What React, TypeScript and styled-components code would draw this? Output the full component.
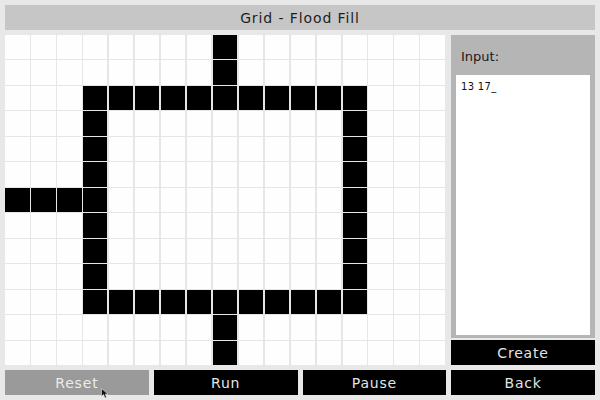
import React from "react";
import styled, { createGlobalStyle } from "styled-components";

const Global = createGlobalStyle`
  html, body { margin: 0; padding: 0; background: #e8e8e8; }
  body { font-family: "DejaVu Sans", "Liberation Sans", sans-serif; }
`;

const ROWS = 13;
const COLS = 17;

const Screen = styled.div`
  position: relative;
  width: 600px;
  height: 400px;
  box-sizing: border-box;
  padding: 5px;
  display: flex;
  flex-direction: column;
  gap: 5px;
  background: #e8e8e8;
  overflow: hidden;
`;

const TitleBar = styled.div`
  height: 25px;
  background: #c6c6c6;
  display: flex;
  align-items: center;
  justify-content: center;
  font-size: 14px;
  letter-spacing: 0.9px;
  color: #1e1e1e;
`;

const Main = styled.div`
  display: flex;
  gap: 6px;
  height: 330px;
`;

const Board = styled.div`
  width: 440px;
  height: 330px;
  display: grid;
  grid-template-columns: repeat(${COLS}, 1fr);
  grid-template-rows: repeat(${ROWS}, 1fr);
  gap: 1.4px;
  background: #e6e6e6;
`;

const Cell = styled.div<{ $on: boolean }>`
  background: ${(p) => (p.$on ? "#000000" : "#fefefe")};
`;

const Side = styled.div`
  flex: 1;
  display: flex;
  flex-direction: column;
  gap: 2px;
`;

const InputPanel = styled.div`
  flex: 1;
  background: #b5b5b5;
  display: flex;
  flex-direction: column;
  padding: 0 5px 3px 5px;
`;

const InputLabel = styled.div`
  height: 40px;
  display: flex;
  align-items: center;
  padding-left: 5px;
  padding-top: 3px;
  box-sizing: border-box;
  font-size: 13px;
  color: #1a1a1a;
`;

const TextBox = styled.div`
  flex: 1;
  background: #ffffff;
  padding: 6px 5px;
  font-size: 10px;
  color: #111;
  letter-spacing: 0.3px;
`;

const Btn = styled.div<{ $variant?: "dark" | "grey" }>`
  height: 25px;
  display: flex;
  align-items: center;
  justify-content: center;
  font-size: 14px;
  letter-spacing: 0.8px;
  background: ${(p) => (p.$variant === "grey" ? "#9a9a9a" : "#000000")};
  color: ${(p) => (p.$variant === "grey" ? "#ececec" : "#e4e4e4")};
`;

const Footer = styled.div`
  display: grid;
  grid-template-columns: repeat(4, 1fr);
  gap: 5px;
`;

const Cursor = styled.svg`
  position: absolute;
  left: 101px;
  top: 388px;
`;

function isBlack(r: number, c: number): boolean {
  if ((r <= 1 || r >= 11) && c === 8) return true;
  if ((r === 2 || r === 10) && c >= 3 && c <= 13) return true;
  if (r > 2 && r < 10 && (c === 3 || c === 13)) return true;
  if (r === 6 && c <= 3) return true;
  return false;
}

export default function App() {
  const cells: React.ReactNode[] = [];
  for (let r = 0; r < ROWS; r++) {
    for (let c = 0; c < COLS; c++) {
      cells.push(<Cell key={`${r}-${c}`} $on={isBlack(r, c)} />);
    }
  }
  return (
    <>
      <Global />
      <Screen>
        <TitleBar>Grid - Flood Fill</TitleBar>
        <Main>
          <Board>{cells}</Board>
          <Side>
            <InputPanel>
              <InputLabel>Input:</InputLabel>
              <TextBox>13 17_</TextBox>
            </InputPanel>
            <Btn>Create</Btn>
          </Side>
        </Main>
        <Footer>
          <Btn $variant="grey">Reset</Btn>
          <Btn>Run</Btn>
          <Btn>Pause</Btn>
          <Btn>Back</Btn>
        </Footer>
        <Cursor width="8" height="11" viewBox="0 0 8 11">
          <path d="M0.5 0.5 L0.5 8.5 L2.5 6.5 L4 10 L5.5 9.3 L4.2 6 L7 6 Z" fill="#111" stroke="#eee" strokeWidth="0.6" />
        </Cursor>
      </Screen>
    </>
  );
}
